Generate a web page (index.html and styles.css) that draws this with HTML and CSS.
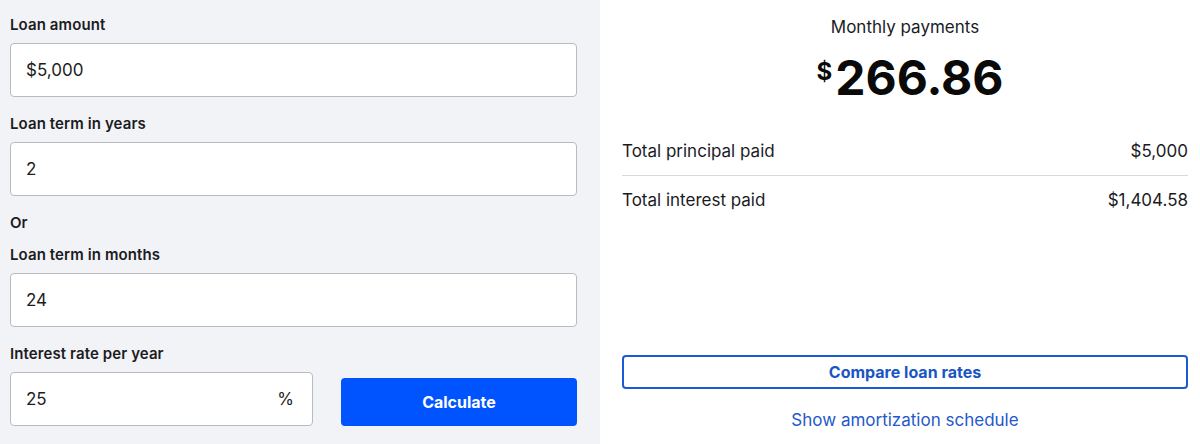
FILE: index.html
```html
<!DOCTYPE html>
<html lang="en">
<head>
<meta charset="utf-8">
<title>Loan calculator</title>
<link rel="stylesheet" href="styles.css">
</head>
<body>
<div class="calc">
  <form class="inputs">
    <div class="field first">
      <label class="label">Loan amount</label>
      <div class="box">$5,000</div>
    </div>
    <div class="field">
      <label class="label">Loan term in years</label>
      <div class="box">2</div>
    </div>
    <div class="or">Or</div>
    <div class="field tight">
      <label class="label">Loan term in months</label>
      <div class="box">24</div>
    </div>
    <div class="field">
      <label class="label">Interest rate per year</label>
      <div class="rate-row">
        <div class="box rate"><span>25</span><span class="pct">%</span></div>
        <button type="button" class="calc-btn">Calculate</button>
      </div>
    </div>
  </form>
  <section class="results">
    <div class="monthly-label">Monthly payments</div>
    <div class="monthly"><span class="cur">$</span><span class="amt">266.86</span></div>
    <div class="rows">
      <div class="row divided"><span>Total principal paid</span><span>$5,000</span></div>
      <div class="row"><span>Total interest paid</span><span>$1,404.58</span></div>
    </div>
    <div class="actions">
      <button type="button" class="compare">Compare loan rates</button>
      <a class="schedule" href="#">Show amortization schedule</a>
    </div>
  </section>
</div>
</body>
</html>
```
FILE: styles.css
```css
* { box-sizing: border-box; }
html, body { margin: 0; padding: 0; }
body {
  font-family: Inter, "Noto Sans", Arial, sans-serif;
  color: #1b1b1f;
  background: #fff;
  width: 1200px;
  height: 444px;
  overflow: hidden;
}
.calc {
  display: flex;
  height: 444px;
}
.inputs {
  width: 600px;
  background: #f2f3f7;
  padding: 15px 23px 0 10px;
  margin: 0;
}
.field { margin-top: 17px; }
.field.first { margin-top: 0; }
.field.tight { margin-top: 12px; }
.label {
  display: block;
  font-size: 15px;
  font-weight: 600;
  line-height: 20px;
  margin-bottom: 8px;
  letter-spacing: 0.1px;
  color: #1c1c22;
}
.or {
  margin-top: 17px;
  font-size: 15px;
  font-weight: 600;
  line-height: 20px;
  color: #1c1c22;
}
.box {
  height: 54px;
  background: #fff;
  border: 1px solid #b9bbc2;
  border-radius: 4px;
  padding: 0 15px;
  display: flex;
  align-items: center;
  font-size: 17px;
  color: #1c1c22;
}
.rate-row {
  display: flex;
  align-items: flex-end;
  gap: 28px;
}
.rate {
  width: 303px;
  justify-content: space-between;
  padding-right: 18px;
}
.calc-btn {
  flex: 1;
  height: 48px;
  border: 0;
  border-radius: 4px;
  background: #0054ff;
  color: #fff;
  font-family: inherit;
  font-size: 16px;
  font-weight: 700;
}
.results {
  width: 600px;
  padding: 16px 12px 13px 22px;
  display: flex;
  flex-direction: column;
}
.monthly-label {
  text-align: center;
  font-size: 17px;
  line-height: 22px;
  color: #1b1b1f;
}
.monthly {
  display: flex;
  justify-content: center;
  align-items: flex-start;
  margin-top: 20px;
  padding-left: 10px;
  color: #0a0a0a;
  font-weight: 700;
}
.cur {
  font-size: 24px;
  line-height: 22px;
  margin-right: 3px;
  margin-top: 3px;
}
.amt {
  font-size: 48px;
  line-height: 40px;
}
.rows { margin-top: 42px; }
.row {
  display: flex;
  justify-content: space-between;
  font-size: 17px;
  line-height: 22px;
  padding: 13px 0;
  color: #1b1b1f;
}
.row:first-child { padding-top: 0; }
.divided { border-bottom: 1px solid #d8d9dc; }
.actions {
  margin-top: auto;
  display: flex;
  flex-direction: column;
  align-items: stretch;
}
.compare {
  height: 34px;
  border: 2px solid #1a5ad6;
  border-radius: 4px;
  background: #fff;
  color: #1a55c4;
  font-family: inherit;
  font-size: 16px;
  font-weight: 700;
}
.schedule {
  margin-top: 20px;
  text-align: center;
  font-size: 17px;
  line-height: 22px;
  color: #2458cc;
  text-decoration: none;
}
```
